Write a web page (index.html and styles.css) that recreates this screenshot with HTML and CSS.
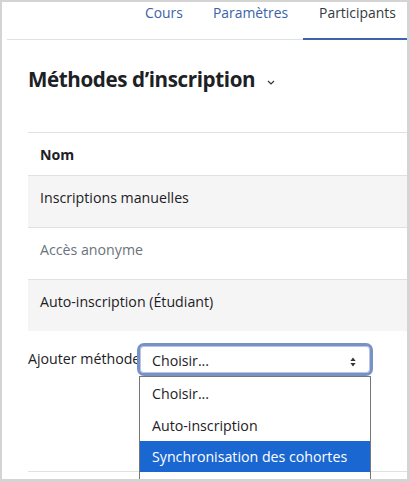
FILE: index.html
```html
<!DOCTYPE html>
<html lang="fr">
<head>
<meta charset="utf-8">
<title>Méthodes d’inscription</title>
<link rel="stylesheet" href="styles.css">
</head>
<body>
<div class="frame">
  <nav class="tabs">
    <a class="tab">Cours</a>
    <a class="tab">Paramètres</a>
    <a class="tab active">Participants</a>
  </nav>
  <main class="content">
    <div class="heading">
      <h1 class="title">Méthodes d’inscription</h1>
      <svg class="caret" width="8" height="5" viewBox="0 0 8 5"><path d="M1 1 L4 4 L7 1" fill="none" stroke="#333" stroke-width="1.2"/></svg>
    </div>
    <div class="table">
      <div class="row head">Nom</div>
      <div class="row odd">Inscriptions manuelles</div>
      <div class="row muted">Accès anonyme</div>
      <div class="row odd last">Auto-inscription (Étudiant)</div>
    </div>
    <div class="addrow">
      <label class="label">Ajouter méthode</label>
      <div class="select">
        <span class="select-text">Choisir...</span>
        <svg class="arrows" width="6" height="10" viewBox="0 0 6 10"><path d="M3 0.5 L5.6 4 L0.4 4 Z M3 9.5 L5.6 6 L0.4 6 Z" fill="#333"/></svg>
        <ul class="options">
          <li class="option">Choisir...</li>
          <li class="option">Auto-inscription</li>
          <li class="option selected">Synchronisation des cohortes</li>
          <li class="option empty"></li>
        </ul>
      </div>
    </div>
  </main>
</div>
</body>
</html>
```
FILE: styles.css
```css
html, body {
  margin: 0;
  padding: 0;
  background: #fff;
}
body {
  font-family: "Open Sans", "Noto Sans", sans-serif;
  font-size: 14.2px;
  color: #1d2125;
}
.frame {
  width: 410px;
  height: 482px;
  box-sizing: border-box;
  border-style: solid;
  border-color: #d4d4d4;
  border-width: 2px 3px 3px 2px;
  overflow: hidden;
  position: relative;
  background: #fff;
}
.tabs {
  display: flex;
  align-items: flex-start;
  margin-left: 5px;
  padding-left: 123px;
  height: 37px;
  border-bottom: 1px solid #dee2e6;
  white-space: nowrap;
}
.tab {
  flex: none;
  box-sizing: border-box;
  height: 38px;
  margin-bottom: -1px;
  padding: 0 15px 0;
  line-height: 22px;
  font-size: 13.9px;
  color: #3b62a8;
  border-bottom: 2px solid transparent;
}
.tab.active {
  color: #343a40;
  padding-left: 16px;
  border-bottom-color: #3c64ab;
}
.content {
  padding-left: 26px;
}
.heading {
  display: flex;
  align-items: center;
  margin-top: 26px;
  height: 27px;
}
.title {
  margin: 0;
  font-size: 20.6px;
  letter-spacing: -0.4px;
  font-weight: 700;
  line-height: 27px;
  color: #1d2125;
}
.caret {
  margin-left: 12px;
  margin-top: 5px;
}
.table {
  margin-top: 39px;
}
.row {
  box-sizing: border-box;
  height: 52px;
  padding: 11px 12px 0;
  line-height: 22px;
  border-top: 1px solid #dee2e6;
  white-space: nowrap;
}
.row.head {
  height: 43px;
  font-weight: 700;
}
.row.odd {
  background: #f5f5f5;
}
.row.muted {
  color: #6a737b;
}
.addrow {
  box-sizing: border-box;
  height: 141px;
  display: flex;
  align-items: flex-start;
  padding-top: 12px;
  border-bottom: 1px solid #dee2e6;
}
.label {
  flex: none;
  width: 109px;
  padding-top: 5px;
  line-height: 22px;
  white-space: nowrap;
}
.select {
  flex: none;
  position: relative;
  box-sizing: border-box;
  width: 236px;
  height: 33px;
  display: flex;
  align-items: flex-start;
  justify-content: space-between;
  padding: 4px 14px 0 12px;
  border: 3px solid #7892c8;
  border-radius: 7px;
  box-shadow: inset 0 0 0 1px #b9c6e2;
  background: #fff;
  line-height: 22px;
  color: #1d2125;
}
.arrows {
  margin-top: 7px;
}
.options {
  position: absolute;
  left: -1px;
  top: 30px;
  width: 232px;
  box-sizing: border-box;
  margin: 0;
  padding: 0;
  list-style: none;
  border: 1px solid #767676;
  background: #fff;
}
.option {
  height: 32px;
  box-sizing: border-box;
  padding: 2px 12px 0;
  line-height: 30px;
  white-space: nowrap;
  color: #1d2125;
}
.option.selected {
  height: 31px;
  padding-top: 1px;
  background: #1a67d2;
  color: #fff;
}
```
